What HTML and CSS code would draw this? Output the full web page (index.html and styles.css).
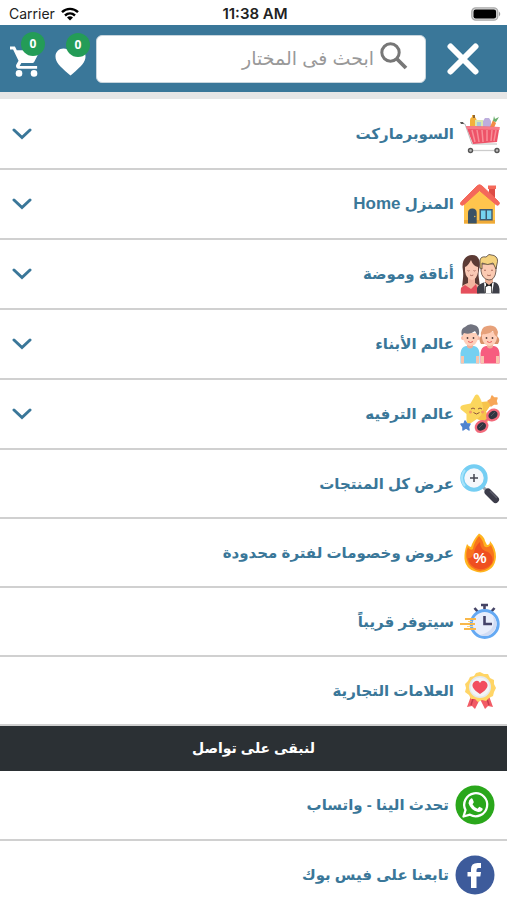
FILE: index.html
```html
<!DOCTYPE html>
<html lang="ar" dir="rtl">
<head>
<meta charset="utf-8">
<meta name="viewport" content="width=device-width, initial-scale=1">
<title>المختار</title>
<link rel="stylesheet" href="styles.css">
</head>
<body>
<div class="status" dir="ltr">
  <div class="status-side">
    <span>Carrier</span>
    <svg class="wifi" viewBox="0 0 18 14" aria-hidden="true"><g fill="none" stroke="#000" stroke-width="2.4"><path d="M1 5.200C5.500.7 12.500.7 17 5.200"/><path d="M4 8.500C7 5.700 11 5.700 14 8.500"/></g><path d="M9 13.500L6 10.500C7.800 8.900 10.200 8.900 12 10.500Z"/></svg>
  </div>
  <strong class="clock">11:38 AM</strong>
  <div class="status-side status-end">
    <svg class="battery" viewBox="0 0 30 14" aria-hidden="true"><rect x=".8" y=".8" width="26" height="12.400" rx="4" fill="#ddd" stroke="#aaa" stroke-width="1.300"/><rect x="2.500" y="2.500" width="22.600" height="9" rx="2.200"/><path d="M28 4.500Q30.500 7 28 9.500Z" fill="#999"/></svg>
  </div>
</div>

<header class="bar">
  <button class="close" type="button" aria-label="إغلاق">
    <svg viewBox="0 0 32 32" aria-hidden="true"><path d="M3.500 3.500L28.500 28.500M28.500 3.500L3.500 28.500" stroke="#fff" stroke-width="6" stroke-linecap="round"/></svg>
  </button>
  <form class="search" role="search">
    <label class="search-label" for="q" aria-label="بحث">
      <svg viewBox="0 0 28 28" aria-hidden="true"><g fill="none" stroke="#777"><circle cx="10.500" cy="10.500" r="8.700" stroke-width="3"/><path d="M17 17L26 26" stroke-width="3.800"/></g></svg>
    </label>
    <input id="q" type="search" placeholder="ابحث فى المختار">
  </form>
  <a class="action" href="#" aria-label="المفضلة">
    <svg viewBox="0 0 32 30" aria-hidden="true"><path fill="#fff" d="M16 29.500L13.500 27.300C5 19.800.5 15.500.5 9.700C.5 5 4.200 1.500 8.800 1.500C11.500 1.500 14.200 2.800 16 4.900C17.800 2.800 20.500 1.500 23.200 1.500C27.800 1.500 31.500 5 31.500 9.700C31.500 15.500 27 19.800 18.500 27.300Z"/></svg>
    <span class="badge">0</span>
  </a>
  <a class="action" href="#" aria-label="سلة التسوق">
    <svg viewBox="0 0 32 32" aria-hidden="true"><path fill="#fff" d="M0 .5V3.500H3.200L8.800 15.300L6.600 19.200C5.500 21.300 7 23.600 9.300 23.600H28V20.600H10L11.700 17.600H22.500C23.700 17.600 24.700 17 25.200 16L30 6.800C30.600 5.700 29.800 4.500 28.600 4.500H7L5.100.5Z"/><circle cx="9.300" cy="28.300" r="3.400" fill="#fff"/><circle cx="24.800" cy="28.300" r="3.400" fill="#fff"/></svg>
    <span class="badge">0</span>
  </a>
</header>

<main>
<nav class="menu" aria-label="الأقسام">
<ul class="list">
  <li><button class="row" type="button" aria-expanded="false">
    <svg class="pic" viewBox="0 0 40 40" aria-hidden="true"><path d="M10 12V6Q10 4 12 3V1H15V3Q17 5 17 8V12Z" fill="#f3b13c"/><path d="M13 1h2v3h-2z" fill="#906530"/><path d="M15 6H23V13H15Z" fill="#d9e7ae"/><path d="M17 8h4v5h-4z" fill="#a8c9dc"/><path d="M23 7L25 4H29L31 7V13H23Z" fill="#bdaedd"/><path d="M30 13L33 6L36 9L34 14Z" fill="#f28b45"/><path d="M33 7L34 2L35 5L39 3L36 8Z" fill="#69ad6b"/><path d="M1 9L5 10L12 30H37" fill="none" stroke="#bbb" stroke-width="1"/><path d="M0 8L3 8L4 10L1 10Z" fill="#555"/><path d="M6 12L39.500 13L37 28L13 30Z" fill="#ee5368"/><path d="M6 12L39.500 13V16L7 15Z" fill="#f77b88"/><path d="M12 16L15 28M17 16L19 28M22 16L23 28M27 16V27M32 16L31 27M36 16L34 27" stroke="#f88e98" stroke-width="1.500"/><path d="M10 36.500H37" stroke="#ccc" stroke-width="1.300"/><circle cx="10.500" cy="36.500" r="2" fill="#bbb" stroke="#555" stroke-width="1.400"/><circle cx="37" cy="36.500" r="2" fill="#bbb" stroke="#555" stroke-width="1.400"/></svg>
    <span class="name">السوبرماركت</span>
    <svg class="chev" viewBox="0 0 20 12" aria-hidden="true"><path d="M2 2L10 9.500L18 2"/></svg>
  </button></li>
  <li><button class="row" type="button" aria-expanded="false">
    <svg class="pic" viewBox="0 0 40 40" aria-hidden="true"><path d="M29 4H35V16L29 11Z" fill="#dd4c45"/><path d="M28 1.500H36V5H28Z" fill="#f4695a"/><path d="M4 18L19.500 5L35 18V39.500H4Z" fill="#ffc54d"/><path d="M4 36H35V39.500H4Z" fill="#efaa38"/><path d="M.7 20.500Q0 19 1.500 17.500L17.500 1.500Q19.500 0 21.500 1.500L38.500 17.500Q40 19 39 20.500Q37.500 22 36 20.500L19.500 6.500L4 20.500Q2 22 .7 20.500Z" fill="#f4685b" stroke="#f4685b" stroke-width="1"/><path d="M8 39.500V29Q8 24.500 12.300 24.500Q16.700 24.500 16.700 29V39.500Z" fill="#3b5265"/><path d="M19.500 25H32.700V36.500H19.500Z" fill="#405a70"/><path d="M21 26.500H25.500V35H21ZM27 26.500H31.300V35H27Z" fill="#75d3f0"/><circle cx="14.800" cy="32.500" r=".7" fill="#ffc54d"/></svg>
    <span class="name">المنزل <span lang="en">Home</span></span>
    <svg class="chev" viewBox="0 0 20 12" aria-hidden="true"><path d="M2 2L10 9.500L18 2"/></svg>
  </button></li>
  <li><button class="row" type="button" aria-expanded="false">
    <svg class="pic" viewBox="0 0 40 40" aria-hidden="true"><path d="M3 38C1 31 4 25 3 17C1 6 6 1 12 1C20 1 21 9 19 16C17 24 22 30 18 38Z" fill="#5c3b35"/><path d="M.5 39.500V36Q1 31 8 29V23H15V29L20 32V39.500Z" fill="#f3b5a0"/><path d="M1 39.500V34L5 31L11 35L16 30L19 39.500Z" fill="#e54f5d"/><path d="M5 13Q8 12 11 6Q13 12 18 13V18Q17 25 12 26Q6 25 5 17Z" fill="#fac9b5"/><path d="M7.500 16.500q1 1 2 0M13.500 16.500q1 1 2 0M10 21q1.700 1.200 3.300 0" fill="none" stroke="#9a554a" stroke-width=".8"/><path d="M17 39.500V34Q18 30 25 28H34Q39 29 39.500 35V39.500Z" fill="#3d3f48"/><path d="M24 28L29 32L34 28L32 39.500H25Z" fill="#fff"/><path d="M26 29L29 30.500L32 29V33L29 31.500L26 33Z" fill="#222"/><path d="M25 22H33V28L29 31L25 28Z" fill="#edb196"/><path d="M21 10H36V17Q35 26 29 26Q22 25 21 17Z" fill="#fbcab2" stroke="#51433b" stroke-width=".8"/><path d="M20 14V6Q21 2 26 3L29 .5L34 1.500Q39 4 37 10L36 15L33 9Q28 12 22 9V15Z" fill="#f4d27e" stroke="#51433b" stroke-width=".8"/><path d="M24 16q1 1 2 0M31 16q1 1 2 0M27 21q2 1.200 4 0" fill="none" stroke="#9a554a" stroke-width=".8"/><path d="M25.500 32V39M31.500 32V39" stroke="#333" stroke-width=".8"/></svg>
    <span class="name">أناقة وموضة</span>
    <svg class="chev" viewBox="0 0 20 12" aria-hidden="true"><path d="M2 2L10 9.500L18 2"/></svg>
  </button></li>
  <li><button class="row" type="button" aria-expanded="false">
    <svg class="pic" viewBox="0 0 40 40" aria-hidden="true"><path d="M.5 39.500V29Q1 23 6 22H14Q19 23 19.500 29V39.500Z" fill="#75d0f1"/><path d="M1 32H4V39.500H1ZM16 32H19V39.500H16Z" fill="#f8c4ad"/><path d="M7 19H13V23Q10 26 7 23Z" fill="#efad99"/><circle cx="3" cy="14" r="2" fill="#f6b9a4"/><circle cx="18" cy="14" r="2" fill="#f6b9a4"/><path d="M3 9H18V14Q17 21 10.500 22Q4 21 3 14Z" fill="#ffcfb9"/><path d="M2 12Q0 5 5 3Q9-1 14 1Q20 2 19 10L18 12L15 7Q10 11 4 9Z" fill="#71737f"/><path d="M20.500 39.500V29Q21 23 26 22H34Q39 23 39.500 29V39.500Z" fill="#f75c7f"/><path d="M21 32H24V39.500H21ZM36 32H39V39.500H36Z" fill="#f8c4ad"/><path d="M21 12Q18 15 21 20H25L23 12ZM37 12Q41 15 38 20H34L36 12Z" fill="#d99169"/><path d="M27 19H33V23Q30 26 27 23Z" fill="#efad99"/><path d="M22 8H37V14Q36 21 29.500 22Q23 21 22 14Z" fill="#ffcfb9"/><path d="M21 13Q20 3 27 2Q36 0 38 8L37 13Q34 11 33 7Q28 11 23 10Z" fill="#e7a17a"/><g fill="#533f3d"><circle cx="7.500" cy="14" r=".9"/><circle cx="13.500" cy="14" r=".9"/><circle cx="26.500" cy="14" r=".9"/><circle cx="32.500" cy="14" r=".9"/></g><path d="M8 17.500q2.500 2 5 0M27 17.500q2.500 2 5 0" fill="none" stroke="#e65b5f" stroke-width="1"/></svg>
    <span class="name">عالم الأبناء</span>
    <svg class="chev" viewBox="0 0 20 12" aria-hidden="true"><path d="M2 2L10 9.500L18 2"/></svg>
  </button></li>
  <li><button class="row" type="button" aria-expanded="false">
    <svg class="pic" viewBox="0 0 40 40" aria-hidden="true"><path d="M15 1.500Q17-.5 19 2L21.500 8L29 7.500Q32.500 9 30 12L26 17.500L28.500 25Q29 28.500 25 27.500L17 25L11 29Q7 31 6.500 27L6.500 20L1 15.500Q-1 12 3 11L10.500 9.500Z" fill="#fbd65d"/><path d="M19 2L21.500 8L29 7.500Q32.500 9 30 12L26 17.500L28.500 25Q29 28.500 25 27.500L17 25Q28 18 19 2Z" fill="#f6c44b"/><path d="M11 15q2-2 4 0M18 15q2-2 4 0M13.500 18.500q3 3 6 0" fill="none" stroke="#8e573d" stroke-width="1"/><circle cx="10.500" cy="18" r="1.500" fill="#f49769"/><circle cx="22.500" cy="18" r="1.500" fill="#f49769"/><path d="M32 2L34 4L37 4L36 7L37 10L34 10L31 12L30 9L28 7L31 5Z" fill="#f7a657" stroke="#f7a657" stroke-width="1.500" stroke-linejoin="round"/><path d="M5 27L7 30L10 30L8.500 33L9 36L6 34L3 36L3 33L1 30L4 30Z" fill="#4e83cf" stroke="#4e83cf" stroke-width="1.500" stroke-linejoin="round"/><g fill="#303440" stroke="#f26a7b" stroke-width="2.400"><ellipse cx="33" cy="21" rx="6" ry="5" transform="rotate(-35 33 21)"/><ellipse cx="21.500" cy="32.500" rx="6" ry="5" transform="rotate(-35 21.500 32.500)"/></g><path d="M25 29Q26 25 29 25" fill="none" stroke="#f26a7b" stroke-width="2"/><path d="M31 22L35 18M19 34L23 30" stroke="#555762" stroke-width="1"/></svg>
    <span class="name">عالم الترفيه</span>
    <svg class="chev" viewBox="0 0 20 12" aria-hidden="true"><path d="M2 2L10 9.500L18 2"/></svg>
  </button></li>
</ul>
<ul class="list list-links">
  <li><a class="row" href="#">
    <svg class="pic" viewBox="0 0 40 40" aria-hidden="true"><path d="M22 22L28 28" stroke="#9ba2aa" stroke-width="3"/><path d="M28 28L35.500 35.500" stroke="#3c3c4a" stroke-width="7" stroke-linecap="round"/><path d="M30 27L37 34" stroke="#5c5d6b" stroke-width="1.500"/><circle cx="14" cy="14" r="11.700" fill="#f5f7fb" stroke="#75cef3" stroke-width="4"/><path d="M5 22A12 12 0 0 1 5 6" fill="none" stroke="#a4e3fb" stroke-width="2"/><path d="M14 10V18M10 14H18" stroke="#444651" stroke-width="1.500"/></svg>
    <span class="name">عرض كل المنتجات</span>
  </a></li>
  <li><a class="row" href="#">
    <svg class="pic" viewBox="0 0 40 40" aria-hidden="true"><path d="M19 .5Q24 3 25 8L27 12Q30 12 30 8Q36 15 36 24Q35 38 20.500 39.500Q6 38 4.500 26Q4 19 7 11Q9 14 11 14Q13 7 19 .5Z" fill="#ffb51f"/><path d="M19 3Q23 7 24 13Q27 16 31 12Q35 20 34 27Q31 37 20 38Q9 36 7 27Q5 20 8 14Q10 18 13 16Q14 9 19 3Z" fill="#f8741d"/><path d="M20 9Q20 17 28 19Q34 23 32 30Q27 37 19 36Q9 34 8 25Q12 26 14 20Q15 13 20 9Z" fill="#ef4f20"/><text class="percent" x="20" y="30" text-anchor="middle">%</text></svg>
    <span class="name">عروض وخصومات لفترة محدودة</span>
  </a></li>
  <li><a class="row" href="#">
    <svg class="pic" viewBox="0 0 40 40" aria-hidden="true"><path d="M24.500 2V7M21 3H28M14.500 6L18 10M34.500 6L31 10" stroke="#454466" stroke-width="2.600"/><circle cx="24.700" cy="22" r="13.500" fill="#e8eefc" stroke="#64a9f3" stroke-width="3"/><path d="M33 14Q37 29 20 33Q31 37 36 25Q38 19 33 14Z" fill="#d1dcf4"/><path d="M24.500 14V22H32" fill="none" stroke="#45446a" stroke-width="2.600"/><path d="M5 17H16M0 22H15M4 27H16" stroke="#f9b84b" stroke-width="2"/><path d="M8 19.500H12M7 24.500H13" stroke="#ffd37d" stroke-width="1"/></svg>
    <span class="name">سيتوفر قريباً</span>
  </a></li>
  <li><a class="row" href="#">
    <svg class="pic" viewBox="0 0 40 40" aria-hidden="true"><path d="M11 25L7 36L12 35L15 38L20 28L25 38L28 35L33 36L29 25Z" fill="#f25b65"/><path d="M13 28L11 34M27 28L29 34" stroke="#c63b4c" stroke-width="1.500"/><path d="M20 1L24 3L28 3L30 7L34 9L34 13L36 17L34 21L33 25L29 27L26 30L22 29L18 31L15 28L11 28L9 24L5 21L6 17L5 13L8 10L10 6L14 5L16 2Z" fill="#ffd566"/><circle cx="20" cy="16" r="11" fill="#e3e8ed"/><circle cx="20" cy="16" r="9.500" fill="#f2f4f6"/><path d="M20 23Q9 16 14 11Q18 8 20 12Q22 8 26 11Q31 16 20 23Z" fill="#f24c5e"/></svg>
    <span class="name">العلامات التجارية</span>
  </a></li>
</ul>
</nav>
<section>
<h2 class="heading">لنبقى على تواصل</h2>
<ul class="list list-contact">
  <li><a class="row" href="#">
    <svg class="pic" viewBox="0 0 40 40" aria-hidden="true"><circle cx="20" cy="20" r="19.500" fill="#2aa71b"/><path d="M8.500 31.500L10.500 25A11.500 11.500 0 1 1 15 29.700Z" fill="none" stroke="#fff" stroke-width="2.300" stroke-linejoin="round"/><path d="M16 13.500Q17 13 17.700 14.300L18.800 17Q19 17.500 17.500 19.200Q19.200 22.500 22.500 23.700L24.300 21.700L27.300 23.200Q28 23.600 27.500 25Q26 27.500 23 27Q15.500 25 13.500 18.200Q13.500 15 16 13.500Z" fill="#fff"/></svg>
    <span class="name">تحدث الينا - واتساب</span>
  </a></li>
  <li><a class="row" href="#">
    <svg class="pic" viewBox="0 0 40 40" aria-hidden="true"><circle cx="20" cy="20" r="19.500" fill="#3d5b9b"/><path fill="#fff" d="M16 33V21.500H12.500V17H16V14Q16 8 22.500 8H26V13H23.500Q21.500 13 21.500 15V17H26L25.300 21.500H21.500V33Z"/></svg>
    <span class="name">تابعنا على فيس بوك</span>
  </a></li>
</ul>
</section>
</main>
</body>
</html>
```
FILE: styles.css
```css
:root {
  --blue: #3a7799;
  --line: #d0d0d0;
}

* {
  box-sizing: border-box;
}

body {
  margin: 0;
  background: #fff;
  color: var(--blue);
  font-family: "Liberation Sans", "DejaVu Sans", sans-serif;
  font-size: 15px;
}

svg {
  display: block;
}

/* Device status line */
.status {
  display: flex;
  align-items: center;
  height: 25px;
  padding: 2px 6px 0 9px;
  color: #222;
  font: 14px/20px Inter, sans-serif;
}

.status-side {
  display: flex;
  flex: 1;
  align-items: center;
  gap: 6px;
}

.status-end {
  justify-content: flex-end;
}

.clock {
  font-size: 15px;
  font-weight: 600;
}

.wifi {
  width: 18px;
  height: 14px;
}

.battery {
  width: 30px;
  height: 14px;
}

/* Top bar */
.bar {
  display: flex;
  align-items: center;
  height: 74px;
  padding: 0 28px 0 10px;
  background: var(--blue);
  border-bottom: 7px solid #e6e6e6;
}

.close {
  width: 32px;
  margin-left: 21px;
  padding: 0;
  border: 0;
  background: none;
}

.search {
  display: flex;
  flex: 1;
  align-items: center;
  height: 48px;
  min-width: 0;
  margin-left: 10px;
  padding: 0 17px;
  gap: 6px;
  background: #fff;
  border: 1px solid #c8d5dd;
  border-radius: 6px;
}

.search-label {
  width: 28px;
  margin-bottom: 6px;
}

.search input {
  flex: 1;
  min-width: 0;
  padding: 0;
  border: 0;
  outline: 0;
  background: none;
  color: #555;
  font: 19px/28px "Liberation Sans", "DejaVu Sans", sans-serif;
}

.search input::placeholder {
  color: #999;
  opacity: 1;
}

.action {
  position: relative;
  width: 31px;
  margin-top: 6px;
}

.action + .action {
  margin-right: 14px;
}

.badge {
  position: absolute;
  top: -14px;
  right: -4px;
  width: 24px;
  height: 24px;
  border-radius: 50%;
  background: #249c57;
  color: #fff;
  font: bold 12px/24px "Open Sans", sans-serif;
  text-align: center;
}

/* Menu rows */
.menu {
  padding-top: 1px;
}

.list {
  margin: 0;
  padding: 0;
  list-style: none;
}

.row {
  display: flex;
  align-items: center;
  width: 100%;
  gap: 6px;
  padding: 14px 7px 14px 12px;
  border: 0;
  border-bottom: 2px solid var(--line);
  background: none;
  color: var(--blue);
  font: bold 15px/24px "Liberation Sans", "DejaVu Sans", sans-serif;
  text-align: right;
  text-decoration: none;
}

.list-links .row {
  padding-bottom: 13px;
}

.list-contact .row {
  padding-right: 12px;
}

.list-contact li:last-child .row {
  padding-bottom: 5px;
  border-bottom: 0;
}

.pic {
  flex: none;
  width: 40px;
  height: 40px;
}

.percent {
  fill: #fff;
  font: bold 15px "Liberation Sans", sans-serif;
}

.name {
  flex: 1;
}

.name [lang="en"] {
  font-size: 17px;
}

.chev {
  flex: none;
  width: 20px;
  height: 12px;
  fill: none;
  stroke: var(--blue);
  stroke-width: 3;
  stroke-linecap: round;
}

.heading {
  margin: 0;
  padding: 10px;
  background: #2b3034;
  color: #fff;
  font-size: 14px;
  line-height: 25px;
  text-align: center;
}
```
